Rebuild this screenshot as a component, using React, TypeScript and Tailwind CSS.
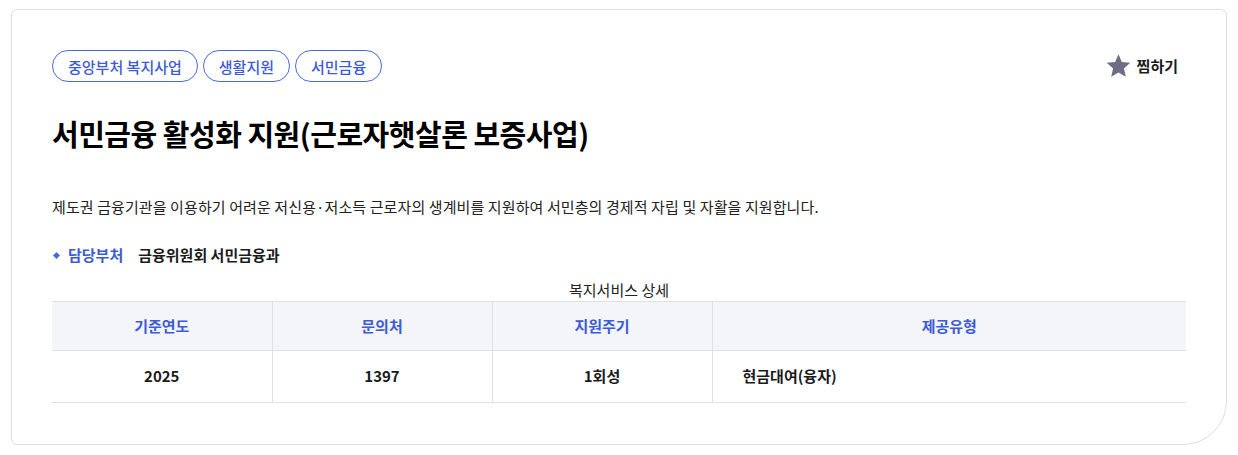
import React from 'react';

const tags = ['중앙부처 복지사업', '생활지원', '서민금융'];

const StarIcon = () => (
  <svg width="27" height="26" viewBox="0 0 24 24" className="shrink-0">
    <path
      d="M12 1.2l3.1 7.2 7.8.7-5.9 5.15 1.76 7.65L12 17.9l-6.76 4 1.76-7.65L1.1 9.1l7.8-.7z"
      fill="#6b6e85"
    />
  </svg>
);

export default function App() {
  return (
    <div
      className="w-[1238px] h-[455px] bg-white pt-[9px] pl-[11px]"
      style={{ fontFamily: '"Noto Sans CJK KR", "Noto Sans", sans-serif' }}
    >
      <div className="w-[1216px] h-[436px] border border-[#dedfe3] rounded-tl-[6px] rounded-tr-[6px] rounded-bl-[6px] rounded-br-[44px] px-10 pt-10 pb-10">
        {/* tags + bookmark */}
        <div className="flex items-center justify-between">
          <div className="flex gap-[5px]">
            {tags.map(t => (
              <span
                key={t}
                className="h-[32px] px-[15px] flex items-center rounded-full border border-[#4a6ae0] text-[15px] text-[#3d5bd6] font-medium leading-none"
              >
                {t}
              </span>
            ))}
          </div>
          <button className="flex items-center gap-[5px] mr-[8px]">
            <StarIcon />
            <span className="text-[15px] font-bold text-[#1b1b1b]">찜하기</span>
          </button>
        </div>

        {/* title */}
        <h1 className="mt-[31px] text-[29px] leading-[40px] font-bold text-black tracking-[-0.5px]">
          서민금융 활성화 지원(근로자햇살론 보증사업)
        </h1>

        {/* description */}
        <p className="mt-[43px] text-[15px] leading-[22px] text-[#222] tracking-[0.1px]">
          제도권 금융기관을 이용하기 어려운 저신용·저소득 근로자의 생계비를 지원하여 서민층의 경제적 자립 및 자활을 지원합니다.
        </p>

        {/* department */}
        <div className="mt-[26px] flex items-center text-[15px] leading-[22px] font-bold">
          <span className="w-[5px] h-[5px] bg-[#4a6ae0] rotate-45 ml-[2px] mr-[9px]" />
          <span className="text-[#3d5bd6]">담당부처</span>
          <span className="ml-[15px] text-[#1b1b1b]">금융위원회 서민금융과</span>
        </div>

        {/* table */}
        <div className="mt-[13px] text-center text-[15px] leading-[22px] text-[#222]">복지서비스 상세</div>
        <table className="w-full border-collapse text-[15px]">
          <colgroup>
            <col className="w-[220px]" />
            <col className="w-[220px]" />
            <col className="w-[220px]" />
            <col />
          </colgroup>
          <thead>
            <tr className="bg-[#f4f5f9] h-[49px] border-t border-b border-[#dfe0e4]">
              <th className="font-bold text-[#3d5bd6] border-r border-[#dfe0e4]">기준연도</th>
              <th className="font-bold text-[#3d5bd6] border-r border-[#dfe0e4]">문의처</th>
              <th className="font-bold text-[#3d5bd6] border-r border-[#dfe0e4]">지원주기</th>
              <th className="font-bold text-[#3d5bd6]">제공유형</th>
            </tr>
          </thead>
          <tbody>
            <tr className="h-[52px] border-b border-[#dfe0e4]">
              <td className="text-center font-bold text-[#1b1b1b] border-r border-[#dfe0e4]">2025</td>
              <td className="text-center font-bold text-[#1b1b1b] border-r border-[#dfe0e4]">1397</td>
              <td className="text-center font-bold text-[#1b1b1b] border-r border-[#dfe0e4]">1회성</td>
              <td className="text-left pl-[30px] font-bold text-[#1b1b1b]">현금대여(융자)</td>
            </tr>
          </tbody>
        </table>
      </div>
    </div>
  );
}
